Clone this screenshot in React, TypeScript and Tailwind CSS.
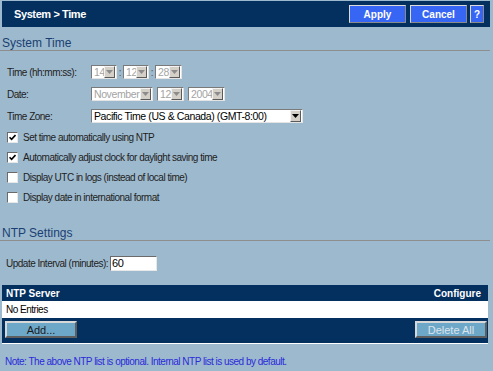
import React from 'react'

const font = { fontFamily: '"Liberation Sans", Arial, sans-serif' }

function FakeSelect({ value, width, disabled = false }: { value: string; width: number; disabled?: boolean }) {
  return (
    <div
      className="flex h-[14px] items-center border border-t-[#7a7a7a] border-l-[#7a7a7a] border-b-[#e4e4e4] border-r-[#e4e4e4] bg-white"
      style={{ width }}
    >
      <span className={`min-w-0 flex-1 whitespace-nowrap pl-[2px] text-[10.5px] leading-[12px] tracking-[-0.4px] ${disabled ? 'text-[#a3a3a3]' : 'text-black'}`}>
        {value}
      </span>
      <span className="mr-[1px] flex h-[12px] w-[11px] shrink-0 items-center justify-center border border-t-[#f2f2f2] border-l-[#f2f2f2] border-b-[#5a5a5a] border-r-[#5a5a5a] bg-[#d4d0c8]">
        <svg width="7" height="4" viewBox="0 0 7 4">
          <path d="M0 0 H7 L3.5 4 Z" fill={disabled ? '#8c8c8c' : '#000'} />
        </svg>
      </span>
    </div>
  )
}

function Check({ checked, label }: { checked: boolean; label: string }) {
  return (
    <div className="flex h-[20px] items-center pl-[7px]">
      <span className="flex h-[11px] w-[11px] items-center justify-center border border-t-[#6a6a6a] border-l-[#6a6a6a] border-b-[#e8e8e8] border-r-[#e8e8e8] bg-white">
        {checked && (
          <svg width="7" height="7" viewBox="0 0 7 7">
            <path d="M0.5 3.2 L2.6 5.4 L6.5 1" stroke="#000" strokeWidth="1.6" fill="none" />
          </svg>
        )}
      </span>
      <span className="ml-[5px] text-[10px] tracking-[-0.5px] text-[#1e1e1e]">{label}</span>
    </div>
  )
}

export default function App() {
  return (
    <div className="h-[371px] w-[493px] overflow-hidden bg-[#9db9cd] pt-[1px]" style={font}>
      {/* top bar */}
      <div className="ml-[2px] flex h-[26px] w-[488px] items-center justify-between bg-[#04305f] pl-[12px] pr-[6px]">
        <span className="text-[11px] font-bold tracking-[-0.4px] text-white">System &gt; Time</span>
        <div className="flex items-center">
          <button className="h-[18px] w-[57px] border border-t-[#dcdcdc] border-l-[#dcdcdc] border-b-[#8a8a8a] border-r-[#8a8a8a] bg-[#3766f4] text-[10px] font-bold text-white">
            Apply
          </button>
          <button className="ml-[4px] h-[18px] w-[57px] border border-t-[#dcdcdc] border-l-[#dcdcdc] border-b-[#8a8a8a] border-r-[#8a8a8a] bg-[#3766f4] text-[10px] font-bold text-white">
            Cancel
          </button>
          <button className="ml-[3px] h-[18px] w-[14px] border border-t-[#dcdcdc] border-l-[#dcdcdc] border-b-[#8a8a8a] border-r-[#8a8a8a] bg-[#3766f4] text-[10px] font-bold text-white">
            ?
          </button>
        </div>
      </div>

      {/* System Time */}
      <div className="mt-[9px] h-[15px] w-[490px] border-b border-[#8e8e8e] pl-[2px] text-[12px] leading-[14px] text-[#1a3f72]">
        System Time
      </div>

      <div className="mt-[13px] flex flex-col gap-[6px] text-[10px] tracking-[-0.5px] text-[#1e1e1e]">
        <div className="flex h-[16px] items-center">
          <span className="w-[91px] pl-[7px]">Time (hh:mm:ss):</span>
          <FakeSelect value="14" width={26} disabled />
          <span className="w-[6px] text-center text-[#555]">:</span>
          <FakeSelect value="12" width={26} disabled />
          <span className="w-[6px] text-center text-[#555]">:</span>
          <FakeSelect value="28" width={27} disabled />
        </div>
        <div className="flex h-[16px] items-center">
          <span className="w-[91px] pl-[7px]">Date:</span>
          <FakeSelect value="November" width={62} disabled />
          <span className="w-[4px]" />
          <FakeSelect value="12" width={27} disabled />
          <span className="w-[4px]" />
          <FakeSelect value="2004" width={37} disabled />
        </div>
        <div className="flex h-[16px] items-center">
          <span className="w-[91px] pl-[7px]">Time Zone:</span>
          <FakeSelect value="Pacific Time (US & Canada) (GMT-8:00)" width={212} />
        </div>
      </div>

      <div className="mt-[3px] flex flex-col">
        <Check checked label="Set time automatically using NTP" />
        <Check checked label="Automatically adjust clock for daylight saving time" />
        <Check checked={false} label="Display UTC in logs (instead of local time)" />
        <Check checked={false} label="Display date in international format" />
      </div>

      {/* NTP Settings */}
      <div className="mt-[20px] h-[14px] w-[490px] border-b border-[#8e8e8e] pl-[2px] text-[12px] leading-[13px] text-[#1a3f72]">
        NTP Settings
      </div>

      <div className="mt-[15px] flex h-[15px] items-center pl-[6px] text-[10px] tracking-[-0.5px] text-[#1e1e1e]">
        <span>Update Interval (minutes):</span>
        <div className="ml-[2px] flex h-[15px] w-[47px] items-center border border-t-[#6a6a6a] border-l-[#6a6a6a] border-b-[#e8e8e8] border-r-[#e8e8e8] bg-white pl-[1px] text-[11px] text-black">
          60
        </div>
      </div>

      {/* NTP server table */}
      <div className="ml-[2px] mt-[14px] w-[486px] border-b border-white bg-[#04305f]">
        <div className="flex h-[16px] items-center justify-between pl-[4px] pr-[7px] text-[10px] font-bold text-white">
          <span>NTP Server</span>
          <span>Configure</span>
        </div>
        <div className="flex h-[17px] items-center bg-white pl-[4px] text-[10px] tracking-[-0.5px] text-black">No Entries</div>
        <div className="flex h-[25px] items-start justify-between pl-[3px] pr-[1px] pt-[3px]">
          <button className="h-[17px] w-[72px] border-2 border-t-[#d8d8d8] border-l-[#d8d8d8] border-b-[#5e5e5e] border-r-[#5e5e5e] bg-[#6ea8c9] text-[11px] leading-[12px] text-[#1a1a1a]">
            Add...
          </button>
          <button className="h-[17px] w-[72px] border-2 border-t-[#d8d8d8] border-l-[#d8d8d8] border-b-[#5e5e5e] border-r-[#5e5e5e] bg-[#6ea8c9] text-[11px] leading-[12px] text-[#dde4ea]">
            Delete All
          </button>
        </div>
      </div>

      <div className="mt-[12px] pl-[5px] text-[10px] leading-[12px] tracking-[-0.5px] text-[#2b2bd9]">
        Note: The above NTP list is optional. Internal NTP list is used by default.
      </div>
    </div>
  )
}
